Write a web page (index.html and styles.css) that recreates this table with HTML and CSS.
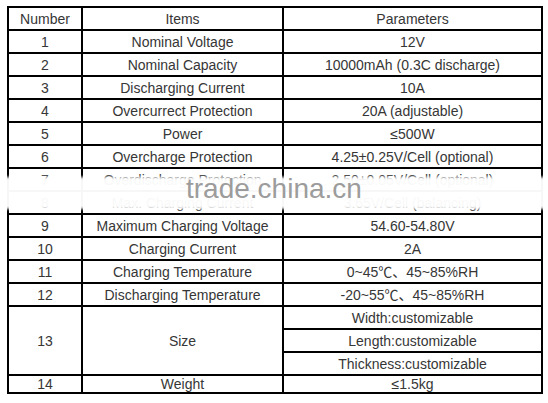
FILE: index.html
```html
<!DOCTYPE html>
<html>
<head>
<meta charset="utf-8">
<link rel="stylesheet" href="styles.css">
</head>
<body>
<div class="page">
<table class="spec">
<colgroup><col class="c1"><col class="c2"><col class="c3"></colgroup>
<tr><td>Number</td><td>Items</td><td>Parameters</td></tr>
<tr><td>1</td><td>Nominal Voltage</td><td>12V</td></tr>
<tr><td>2</td><td>Nominal Capacity</td><td>10000mAh (0.3C discharge)</td></tr>
<tr><td>3</td><td>Discharging Current</td><td>10A</td></tr>
<tr><td>4</td><td>Overcurrect Protection</td><td>20A (adjustable)</td></tr>
<tr><td>5</td><td>Power</td><td>≤500W</td></tr>
<tr><td>6</td><td>Overcharge Protection</td><td>4.25±0.25V/Cell (optional)</td></tr>
<tr><td>7</td><td>Overdischarge Protection</td><td>2.50±0.05V/Cell (optional)</td></tr>
<tr><td>8</td><td>Max. Charging Current</td><td>3.65V/Cell (balancing)</td></tr>
<tr><td>9</td><td>Maximum Charging Voltage</td><td>54.60-54.80V</td></tr>
<tr><td>10</td><td>Charging Current</td><td>2A</td></tr>
<tr><td>11</td><td>Charging Temperature</td><td>0~45℃、45~85%RH</td></tr>
<tr><td>12</td><td>Discharging Temperature</td><td>-20~55℃、45~85%RH</td></tr>
<tr><td rowspan="3">13</td><td rowspan="3">Size</td><td>Width:customizable</td></tr>
<tr><td>Length:customizable</td></tr>
<tr><td>Thickness:customizable</td></tr>
<tr class="last"><td>14</td><td>Weight</td><td>≤1.5kg</td></tr>
</table>
<div class="band"></div>
<div class="mark">trade.china.cn</div>
</div>
</body>
</html>
```
FILE: styles.css
```css
html, body {
  margin: 0;
  padding: 0;
  background: #ffffff;
}
.page {
  position: relative;
  width: 548px;
  height: 403px;
  overflow: hidden;
}
.spec {
  margin: 6px 0 0 7px;
  border-collapse: separate;
  border-spacing: 0;
  border-top: 2px solid #000;
  border-left: 2px solid #000;
  table-layout: fixed;
  width: 536px;
  font-family: "Liberation Sans", Arial, "Noto Sans CJK SC", sans-serif;
  font-size: 14px;
  color: #363636;
}
.c1 { width: 74px; }
.c2 { width: 201px; }
.c3 { width: 259px; }
.spec tr { height: 23px; }
.spec td {
  border-right: 2px solid #000;
  border-bottom: 2px solid #000;
  padding: 0;
  text-align: center;
  vertical-align: middle;
  line-height: 16px;
  white-space: nowrap;
}
.spec tr.last { height: 18px; }
.spec tr.last td { vertical-align: bottom; line-height: 16px; }
.band {
  position: absolute;
  left: -10px;
  right: -10px;
  top: 177px;
  height: 32px;
  background: #ffffff;
  filter: blur(1.5px);
  opacity: 0.97;
}
.mark {
  position: absolute;
  left: 186px;
  top: 172px;
  font-family: "Liberation Sans", Arial, sans-serif;
  font-size: 28px;
  line-height: 34px;
  color: #9c9c9c;
}
```
